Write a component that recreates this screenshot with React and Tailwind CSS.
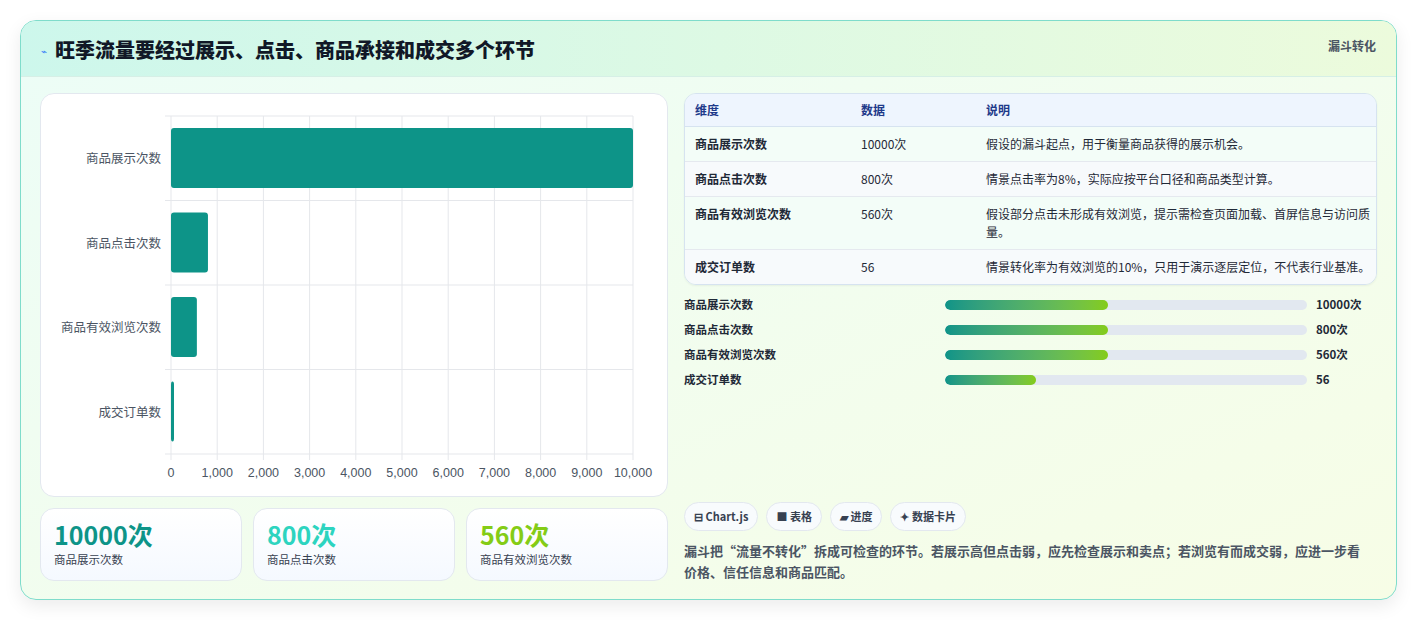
export default function App() {
  const rows = [
    ["商品展示次数", "10000次", "假设的漏斗起点，用于衡量商品获得的展示机会。"],
    ["商品点击次数", "800次", "情景点击率为8%，实际应按平台口径和商品类型计算。"],
    ["商品有效浏览次数", "560次", "假设部分点击未形成有效浏览，提示需检查页面加载、首屏信息与访问质量。"],
    ["成交订单数", "56", "情景转化率为有效浏览的10%，只用于演示逐层定位，不代表行业基准。"],
  ];
  const vals = [10000, 800, 560, 56];
  const prog = [45, 45, 45, 25];
  const font = { fontFamily: '"Noto Sans CJK SC","Liberation Sans",sans-serif' };
  const x0 = 130, pw = 462, y0 = 22, rh = 84.5;
  return (
    <div className="w-[1417px] h-[621px] bg-white pt-[20px] px-[20px]" style={font}>
      <div className="w-[1377px] h-[580px] rounded-[16px] border border-[#7fdccb] shadow-[0_6px_18px_rgba(0,0,0,0.08)] bg-gradient-to-br from-[#ecfdf7] to-[#f7fde6] overflow-hidden flex flex-col">
        <div className="h-[56px] flex items-start justify-between px-[20px] bg-gradient-to-r from-[#cdf7ec] to-[#ecfbdc] border-b border-[#d6efe6]">
          <div className="flex items-center gap-[8px] mt-[14px]">
            <span className="text-[10px] text-[#3b82f6]">⌁</span>
            <span className="text-[20px] font-black text-[#111827]">旺季流量要经过展示、点击、商品承接和成交多个环节</span>
          </div>
          <span className="text-[12px] font-bold text-[#4b5563] mt-[16px]">漏斗转化</span>
        </div>
        <div className="flex gap-[16px] px-[19px] pt-[16px]">
          <div className="w-[628px] flex flex-col gap-[11px]">
            <div className="h-[404px] rounded-[14px] border border-[#e3e8ef] bg-white">
              <svg width="626" height="402">
                {[...Array(11)].map((_, i) => (
                  <line key={i} x1={x0 + i * pw / 10} x2={x0 + i * pw / 10} y1={y0} y2={y0 + 4 * rh + 6} stroke="#e5e7eb" />
                ))}
                {[0, 1, 2, 3, 4].map(i => (
                  <line key={i} x1={x0 - 6} x2={x0 + pw} y1={y0 + i * rh} y2={y0 + i * rh} stroke="#e5e7eb" />
                ))}
                {vals.map((v, i) => (
                  <g key={i}>
                    <rect x={x0} y={y0 + i * rh + 12} width={Math.max(3, v / 10000 * pw)} height={60} rx="3" fill="#0d9488" />
                    <text x={x0 - 10} y={y0 + i * rh + 47} textAnchor="end" fontSize="12.5" fill="#4b5563">{rows[i][0]}</text>
                  </g>
                ))}
                {[...Array(11)].map((_, i) => (
                  <text key={i} x={x0 + i * pw / 10} y={383} textAnchor="middle" fontSize="12.5" fill="#4b5563" fontFamily="Liberation Sans">{(i * 1000).toLocaleString("en-US")}</text>
                ))}
              </svg>
            </div>
            <div className="flex gap-[11px]">
              {[["10000次", "text-[#0d9488]", "商品展示次数"], ["800次", "text-[#2dd4bf]", "商品点击次数"], ["560次", "text-[#84cc16]", "商品有效浏览次数"]].map(([v, c, l]) => (
                <div key={l} className="flex-1 h-[73px] rounded-[14px] border border-[#e3e8ef] bg-gradient-to-b from-white to-[#f5f9ff] px-[13px] pt-[8px]">
                  <div className={`text-[25px] font-bold leading-[34px] ${c}`}>{v}</div>
                  <div className="text-[11.5px] text-[#374151]">{l}</div>
                </div>
              ))}
            </div>
          </div>
          <div className="w-[695px] flex flex-col">
            <div className="rounded-[12px] border border-[#d6e3f0] overflow-hidden text-[12px] shadow-[0_1px_2px_rgba(0,0,0,0.05)]">
              <div className="flex h-[33px] items-center bg-[#eef5fe] border-b border-[#d6e3f0] font-bold text-[#1e3a8a]">
                <div className="w-[176px] pl-[10px]">维度</div><div className="w-[125px]">数据</div><div>说明</div>
              </div>
              {rows.map((r, i) => (
                <div key={i} className={`flex items-start border-b border-[#e5e9ef] last:border-b-0 py-[8px] leading-[18px] text-[#1f2937] ${i % 2 ? "bg-[#f7fafc]" : "bg-[#f3fdf8]"}`}>
                  <div className="w-[176px] pl-[10px] font-bold">{r[0]}</div>
                  <div className="w-[125px]">{r[1]}</div>
                  <div className="flex-1 pr-[4px]">{r[2]}</div>
                </div>
              ))}
            </div>
            <div className="flex flex-col gap-[8px] mt-[11px]">
              {rows.map((r, i) => (
                <div key={i} className="flex items-center h-[17px] text-[11.5px] font-bold text-[#1f2937]">
                  <div className="w-[261px]">{r[0]}</div>
                  <div className="w-[362px] h-[10px] rounded-full bg-[#e2e8f0] overflow-hidden">
                    <div className="h-full rounded-full bg-gradient-to-r from-[#0d9488] to-[#84cc16]" style={{ width: prog[i] + "%" }} />
                  </div>
                  <div className="ml-[9px]">{r[1]}</div>
                </div>
              ))}
            </div>
            <div className="flex gap-[8px] mt-[114px] text-[11px] font-bold text-[#374151]">
              {["⊟ Chart.js", "■ 表格", "▰ 进度", "✦ 数据卡片"].map(t => (
                <span key={t} className="h-[29px] px-[9px] flex items-center rounded-full border border-[#e3e8ef] bg-[#f8fbfd]">{t}</span>
              ))}
            </div>
            <div className="mt-[9px] pr-[10px] text-[13px] leading-[21px] text-[#4b5563] font-bold">漏斗把“流量不转化”拆成可检查的环节。若展示高但点击弱，应先检查展示和卖点；若浏览有而成交弱，应进一步看价格、信任信息和商品匹配。</div>
          </div>
        </div>
      </div>
    </div>
  );
}
